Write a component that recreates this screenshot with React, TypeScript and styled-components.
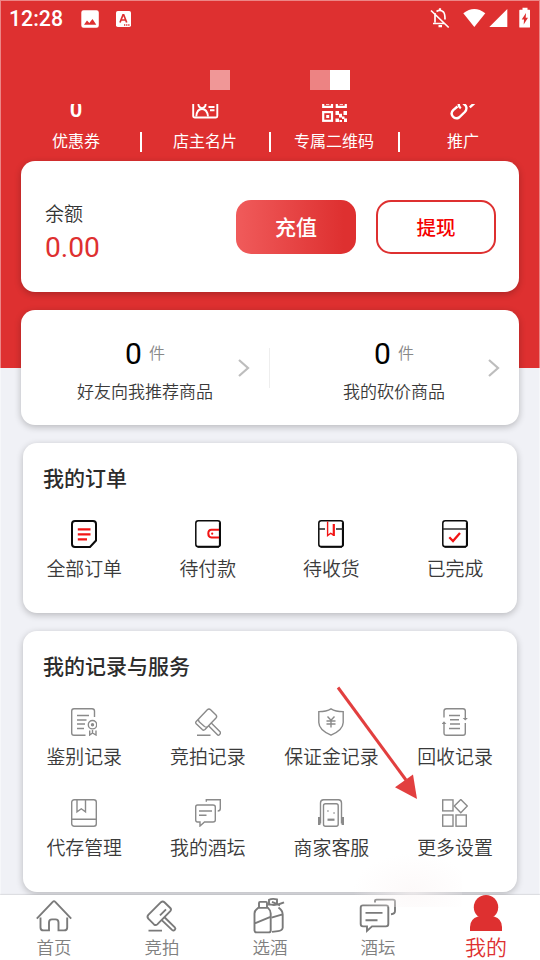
import React from "react";
import styled, { createGlobalStyle } from "styled-components";

const RED = "#de3030";

const GlobalStyle = createGlobalStyle`
  * { box-sizing: border-box; }
  html, body { margin: 0; padding: 0; background: #f0f1f6; }
  body { font-family: Roboto, "Noto Sans CJK SC", sans-serif; overflow: hidden; }
  svg { display: block; flex: none; }
`;

const Page = styled.div`
  position: relative;
  width: 540px;
  height: 960px;
  overflow: hidden;
  display: flex;
  flex-direction: column;
  background: linear-gradient(${RED} 0 368px, #f0f1f6 368px);
  &::after {
    content: "";
    position: absolute;
    inset: 0 0 -2px 0;
    box-shadow: inset 0 0 0 1px rgba(255, 255, 255, 0.42);
    pointer-events: none;
  }
`;

const StatusBar = styled.div`
  height: 38px;
  flex: none;
  display: flex;
  align-items: center;
  padding: 0 10px 0 9px;
  color: #fff;
`;
const Clock = styled.span`
  font-size: 21.3px;
  font-weight: 500;
  line-height: 38px;
  width: 55px;
`;
const StatusLeft = styled.div`
  display: flex;
  align-items: center;
  gap: 17px;
  flex: 1;
`;
const StatusRight = styled.div`
  display: flex;
  align-items: center;
`;

const TitleBar = styled.div`
  height: 66px;
  flex: none;
  display: flex;
  padding: 32px 0 0 210px;
`;
const Block = styled.div<{ $color: string; $gap?: number }>`
  width: 20px;
  height: 20px;
  margin-right: ${(p) => p.$gap ?? 0}px;
  background: ${(p) => p.$color};
`;

const Shortcuts = styled.div`
  height: 57px;
  flex: none;
  overflow: hidden;
  display: grid;
  grid-template-columns: repeat(4, 129px);
  padding-left: 13px;
`;
const Shortcut = styled.div`
  display: flex;
  flex-direction: column;
  align-items: center;
  padding-right: 2px;
  color: #fff;
  background: linear-gradient(#fff, #fff) right 28px / 2px 20px no-repeat;
  &:last-child { background: none; }
`;
const ShortcutTop = styled.div`
  height: 28px;
  margin-right: 1px;
  overflow: hidden;
`;
const ShortcutCount = styled.div`
  font-size: 22px;
  font-weight: 600;
  line-height: 22px;
  margin-top: -7px;
  padding-top: 2px;
`;
const ShortcutLabel = styled.div`
  font-size: 16px;
  line-height: 20px;
  margin-right: 1px;
`;

const Card = styled.section<{ $h: number; $gap: number; $inset: number }>`
  flex: none;
  height: ${(p) => p.$h}px;
  margin: 0 ${(p) => p.$inset}px ${(p) => p.$gap}px;
  border-radius: 14px;
  background: #fff;
  box-shadow: 0 2px 7px rgba(0, 0, 0, 0.24);
`;

const Balance = styled(Card)`
  display: flex;
  align-items: center;
  padding: 0 23px 0 24px;
`;
const BalanceInfo = styled.div`
  flex: 1;
  padding-top: 14px;
`;
const BalanceLabel = styled.div`
  font-size: 19px;
  line-height: 28px;
  color: #333;
  font-weight: 350;
`;
const BalanceValue = styled.div`
  font-size: 28.2px;
  line-height: 37px;
  color: ${RED};
`;
const Button = styled.button<{ $outline?: boolean }>`
  width: 120px;
  height: 54px;
  margin-left: ${(p) => (p.$outline ? 20 : 0)}px;
  padding: 0 0 1px;
  border-radius: 15px;
  border: ${(p) => (p.$outline ? `2px solid ${RED}` : "0")};
  background: ${(p) => (p.$outline ? "#fff" : `linear-gradient(90deg, #f05b5b, ${RED} 90%)`)};
  color: ${(p) => (p.$outline ? "#f50000" : "#fff")};
  font-family: inherit;
  font-weight: 500;
  font-size: ${(p) => (p.$outline ? 19.5 : 21)}px;
`;

const Goods = styled(Card)`
  display: grid;
  grid-template-columns: 249px 1fr;
`;
const GoodsItem = styled.div<{ $divider?: boolean }>`
  display: flex;
  align-items: center;
  justify-content: space-between;
  padding: 0 ${(p) => (p.$divider ? 20 : 19)}px 0 ${(p) => (p.$divider ? 56 : 73)}px;
  background: ${(p) =>
    p.$divider ? "linear-gradient(#eee, #eee) right 38px / 1px 40px no-repeat" : "none"};
`;
const GoodsText = styled.div`
  display: flex;
  flex-direction: column;
  align-items: center;
  padding-top: 8px;
`;
const GoodsCount = styled.div`
  display: flex;
  align-items: center;
  height: 40px;
  gap: 7px;
  color: #000;
  font-size: 30px;
  line-height: 40px;
`;
const Unit = styled.span`
  font-size: 16px;
  color: #888;
  font-weight: 350;
`;
const GoodsLabel = styled.div`
  font-size: 17px;
  line-height: 36px;
  height: 36px;
  color: #3a3a3a;
  font-weight: 350;
  white-space: nowrap;
`;

const CardTitle = styled.h2`
  margin: 0;
  padding-left: 20px;
  font-size: 21px;
  line-height: 30px;
  font-weight: 500;
  color: #2c2c2c;
`;
const Panel = styled(Card)`
  padding-top: 21px;
`;
const Grid = styled.div`
  display: grid;
  grid-template-columns: repeat(4, 123.6px);
  grid-auto-rows: 91px;
  margin: 26px 0 0 -0.6px;
`;
const Entry = styled.div`
  display: flex;
  flex-direction: column;
  align-items: center;
  gap: 7px;
`;
const EntryLabel = styled.span`
  font-size: 18.9px;
  line-height: 30px;
  color: #3a3a3a;
  font-weight: 350;
  white-space: nowrap;
`;

const TabBar = styled.nav`
  height: 65px;
  flex: none;
  display: grid;
  grid-template-columns: repeat(5, 108px);
  background: #fff;
  box-shadow: 0 -1px 1px rgba(0, 0, 0, 0.08);
  z-index: 1;
`;
const Tab = styled.div<{ $active?: boolean }>`
  display: flex;
  flex-direction: column;
  align-items: center;
  color: ${(p) => (p.$active ? RED : "#808080")};
  font-size: ${(p) => (p.$active ? 21 : 17.5)}px;
  font-weight: 350;
  line-height: 29px;
`;
const TabIcon = styled.div`
  height: 39px;
  flex: none;
`;

const Pointer = styled.svg`
  position: absolute;
  left: 330px;
  top: 680px;
`;
const Haze = styled.div`
  position: absolute;
  left: 352px;
  top: 853px;
  width: 110px;
  height: 54px;
  z-index: 2;
  background: radial-gradient(ellipse at 55% 70%, rgba(251, 246, 246, 0.65), rgba(255, 252, 252, 0) 70%);
`;

type SvgProps = { w: number; h: number; stroke?: string; sw?: number; children: React.ReactNode };
const Svg = ({ w, h, stroke = "none", sw = 1, children }: SvgProps) => (
  <svg width={w} height={h} viewBox={`0 0 ${w} ${h}`} fill="none" stroke={stroke} strokeWidth={sw}>
    {children}
  </svg>
);

const shortcuts = [
  { label: "优惠券", top: <ShortcutCount>0</ShortcutCount> },
  {
    label: "店主名片",
    top: (
      <Svg w={27} h={18} stroke="#fff" sw={1.9}>
        <path d="M1.2 -3V12Q1.2 13.5 3 13.5H24Q25.3 13.5 25.3 12V-3" />
        <circle cx="10" cy="0.5" r="3.6" />
        <path d="M4.3 12.5Q4.8 5 10 5T16 12.5" />
        <path d="M16.5 3H22.5M18 6.3H22.5" />
      </Svg>
    ),
  },
  {
    label: "专属二维码",
    top: (
      <Svg w={25} h={18}>
        <path d="M1.2 -4V2.8H10V-4M14.8 -4V2.8H23.8V-4" stroke="#fff" strokeWidth="2.2" />
        <path d="M4 0H7.3V.8H4ZM17.7 0H21V.8H17.7Z" fill="#fff" />
        <rect x="1.2" y="8.1" width="8.8" height="8.7" stroke="#fff" strokeWidth="2.2" />
        <path
          d="M4.2 11H7.2V14H4.2ZM13.5 7H17V11H13.5ZM21.5 7H25V11H21.5ZM17 9.7H20V13.5H17ZM13.5 14.5H17V18H13.5ZM20 12.5H22.5V15H20ZM22 14.5H25V18H22ZM17.5 16H20V18H17.5Z"
          fill="#fff"
        />
      </Svg>
    ),
  },
  {
    label: "推广",
    top: (
      <Svg w={26} h={18} stroke="#fff" sw={2.4}>
        <path d="M7.5 2.5L3.2 6.2C-.8 10.2 4.2 16.5 9.3 13.4L14.8 8C17.4 5 16.6 2 14.5 .5L12.5 -1.5" />
        <path d="M9.2 -1Q7.8 2.2 10.8 4.4M19.8 3.4L25 -1.4" />
      </Svg>
    ),
  },
];

const orders = [
  {
    label: "全部订单",
    icon: (
      <>
        <path d="M4 1H22Q25 1 25 4V20.5L19 27H4Q1 27 1 24V4Q1 1 4 1Z" stroke="#0a0a0a" strokeWidth="2" />
        <path d="M6.8 9.3H19.5M6.8 14.3H19.5M6.8 19.3H16" stroke="#f21414" strokeWidth="2.3" />
      </>
    ),
  },
  {
    label: "待付款",
    icon: (
      <>
        <rect x="0.8" y="0.8" width="24.4" height="26" rx="2.5" stroke="#0a0a0a" strokeWidth="1.5" />
        <path d="M24.9 2.5V25.5M2.5 26.8H24" stroke="#0a0a0a" strokeWidth="2" />
        <path d="M24 9.8H16.5Q13.3 9.8 13.3 13.5T16.5 17.4H24" stroke="#f21414" strokeWidth="2" />
        <circle cx="17.2" cy="13.7" r="1.1" fill="#f21414" />
      </>
    ),
  },
  {
    label: "待收货",
    icon: (
      <>
        <rect x="0.8" y="0.8" width="24.4" height="26" rx="2.5" stroke="#0a0a0a" strokeWidth="1.5" />
        <path d="M24.9 2.5V25.5M2.5 26.8H24" stroke="#0a0a0a" strokeWidth="2" />
        <path d="M1 9H7M18 9H25" stroke="#222" strokeWidth="1.4" />
        <path d="M9.6 1.5V15.6L12.7 13.3L16 15.2" stroke="#f21414" strokeWidth="1.4" />
        <path d="M15.8 4V16" stroke="#f21414" strokeWidth="2.2" />
      </>
    ),
  },
  {
    label: "已完成",
    icon: (
      <>
        <rect x="0.8" y="0.8" width="24.4" height="26" rx="2.5" stroke="#0a0a0a" strokeWidth="1.5" />
        <path d="M24.9 2.5V25.5M2.5 26.8H24" stroke="#0a0a0a" strokeWidth="2" />
        <path d="M1 9H25" stroke="#222" strokeWidth="1.4" />
        <path d="M7.3 17.3L11 21L18 13" stroke="#f21414" strokeWidth="2.3" />
      </>
    ),
  },
];

const services = [
  {
    label: "鉴别记录",
    icon: (
      <>
        <path d="M23.5 9V3Q23.5 .7 21 .7H3Q.7 .7 .7 3V25Q.7 27.3 3 27.3H14.5" />
        <path d="M6 7.5H18M6 12H15.5M6 16H14M6 20.5H13" />
        <circle cx="21.5" cy="16.7" r="4.2" />
        <circle cx="21.5" cy="16.7" r="1" fill="#8a8a8a" />
        <path d="M18.7 22.5V27L21.5 25L25 27V22.5M21.5 22V25" />
      </>
    ),
  },
  {
    label: "竞拍记录",
    icon: (
      <>
        <path d="M12.3 1.8Q14 .2 15.6 1.8L21 7Q22.3 8.5 21 10L10 21.6Q8.7 22.8 7.3 21.6L1.2 15.8Q.2 14.5 1.2 13.4Z" />
        <path d="M3.5 11.5Q3.5 13.5 5 14.5L9.5 18.5Q11 19.5 12 19" />
        <path d="M16 14.8L25 23.8Q26 25 25 26L24.4 26.7Q23.3 27.7 22.2 26.5L13.3 17.6M2 27.2H15.5" />
      </>
    ),
  },
  {
    label: "保证金记录",
    icon: (
      <>
        <path d="M13 .8Q8.5 3.6 .8 3.6V14.5Q1 22 13 27.2Q25 22 25.2 14.5V3.6Q17.5 3.6 13 .8Z" />
        <path d="M9.5 8.5L13 12.3L16.5 8.5M8.5 13H17.5M8.5 16H17.5M13 12.3V19.5" />
      </>
    ),
  },
  {
    label: "回收记录",
    icon: (
      <>
        <path d="M2 9.5V3Q2 .7 4.5 .7H21Q23.3 .7 23.3 3V10M23.3 15V25Q23.3 27.3 21 27.3H4.5Q2 27.3 2 25V16" />
        <path d="M7 7.5H18M8 11.7H17M8 16H18M7 20.5H18" />
        <path d="M20.7 10H25.9L23.3 12.6ZM-.4 16H4.4L2 13.3Z" fill="#8a8a8a" strokeWidth="0" />
      </>
    ),
  },
  {
    label: "代存管理",
    icon: (
      <>
        <rect x="0.7" y="0.7" width="24.6" height="26.6" rx="2.5" />
        <path d="M.7 20.3H25.3M6 .7V12.8L10.3 9.8L14.5 12.8V.7" />
      </>
    ),
  },
  {
    label: "我的酒坛",
    icon: (
      <>
        <path d="M11.3 2.7V.7H25.3V9.5Q25.3 12 22.7 12" />
        <path d="M2.5 6H18Q20.3 6 20.3 8V21Q20.3 23 18 23H9.5L5 27V23H2.5Q.7 23 .7 21V8Q.7 6 2.5 6Z" />
        <path d="M4 12H17M4 16.3H11.5" />
      </>
    ),
  },
  {
    label: "商家客服",
    icon: (
      <>
        <path d="M2.5 24.5V4Q2.5 .8 5.5 .8H20.5Q23.5 .8 23.5 4V24.5" />
        <path d="M1.2 18V26M24.8 18V26" strokeWidth="2.4" />
        <rect x="5.5" y="4.7" width="14.7" height="22.6" rx="2" />
        <path d="M9.5 20.7H16.5" strokeWidth="2.2" />
        <path d="M9.3 12H10.6M15.4 14H16.7" />
      </>
    ),
  },
  {
    label: "更多设置",
    icon: (
      <>
        <rect x="0.7" y="0.9" width="10.3" height="11" />
        <rect x="0.7" y="16" width="10.3" height="11.2" />
        <rect x="14" y="16" width="10.3" height="11.2" />
        <path d="M18.8 .5L25.3 7L18.8 13.7L12.3 7Z" />
      </>
    ),
  },
];

const tabs = [
  {
    label: "首页",
    icon: (
      <>
        <path d="M.8 19.2L17 2.3Q18 1.2 19 2.3L35.2 19.2" />
        <path d="M4.5 18V28Q4.5 31 7.5 31H13V23Q13 20 16 20H19.5Q22.5 20 22.5 23V31H28Q31.2 31 31.2 28V18" />
      </>
    ),
  },
  {
    label: "竞拍",
    icon: (
      <>
        <path d="M17 2.8Q18.7 1.2 20.4 2.8L26.3 8.6Q27.7 10.2 26.3 11.8L13.3 25Q11.7 26.4 10 25L4.3 19.3Q2.7 17.3 4.3 15.5Z" />
        <path d="M16 16L22 10M20.5 17.8L30.8 28Q32 29.3 30.8 30.5Q29.5 31.8 28 30.5L17.5 20.5M4.5 31.2H18" />
      </>
    ),
  },
  {
    label: "选酒",
    icon: (
      <>
        <path d="M7 8.5V3.5Q7 2.5 8 2.5H14Q15 2.5 15 3.5V8.5" />
        <path d="M6 8.5H16Q18.7 11 18.7 14V31Q18.7 33 16.5 33H5Q2.5 33 2.5 31V14Q2.5 11 6 8.5ZM2.8 24L18.5 17.5" />
        <path d="M17 6V.5Q20 -1.2 25 0V6M16.5 4.8Q24 7 32 3M20 2.5L28 6M26.5 8Q30.7 11 30.7 15V28.5Q30 31.5 26 31.7L20 32.5M19.5 18.3L30.5 15" />
      </>
    ),
  },
  {
    label: "酒坛",
    icon: (
      <>
        <path d="M15 3.2V1.5Q15 .2 16.5 .2H33Q35 .2 35 2V11.5Q35 14.3 31 14.8" />
        <path d="M3 6H26Q28.3 6 28.3 8.3V24.7Q28.3 27 26 27H12L7 31.5V27H3Q.7 27 .7 24.7V8.3Q.7 6 3 6Z" />
        <path d="M5.5 13.5H22.5M5.5 20.8H17.5" />
      </>
    ),
  },
];

const StatusIcons = () => (
  <StatusRight>
    <Svg w={100} h={24}>
      <g stroke="#fff" strokeWidth="1.8" transform="translate(0 1)">
        <path d="M1 2.5L18.7 19.5M5 5V14.5M3 15.5H14.5M6.5 3.5Q10 1.2 13.5 4Q15 5.5 15 11.5" strokeWidth="1.7" />
        <path d="M8.5 18.2H12M10 .2V2" strokeWidth="2.2" />
      </g>
      <path d="M33.3 6.3Q44.3 -2.3 55.3 6.3L44.3 20Z" fill="#fff" />
      <path d="M77.3 2V20H59.3Z" fill="#fff" />
      <path
        d="M92.5 1.3H97.5V3.3H99.5Q100 3.3 100 4V20.5Q100 21 99.5 21H90Q89.3 21 89.3 20.5V4Q89.3 3.3 90 3.3H92.5ZM96 6.5L91.7 13H94L93.7 18L98 11.3H95.7Z"
        fill="#fff"
        fillRule="evenodd"
        transform="translate(0 -.5)"
      />
    </Svg>
  </StatusRight>
);

export default function App() {
  return (
    <>
      <GlobalStyle />
      <Page>
        <StatusBar>
          <StatusLeft>
            <Clock>12:28</Clock>
            <Svg w={18} h={18}>
              <path
                d="M2.5 .3H15.5Q17.8 .3 17.8 2.5V15.5Q17.8 17.7 15.5 17.7H2.5Q.3 17.7 .3 15.5V2.5Q.3 .3 2.5 .3ZM3 14.7H15.3L11.5 9L8.3 13L6 10.5Z"
                fill="#fff"
                fillRule="evenodd"
              />
            </Svg>
            <Svg w={16} h={16}>
              <rect width="15" height="16" rx="1.8" fill="#fff" />
              <path d="M4 11.5L7 3.8H7.7L10.7 11.5M5.2 9H9.5" stroke={RED} strokeWidth="1.7" />
              <path d="M8 14H13.5" stroke={RED} strokeWidth="1.3" strokeDasharray="1.3 .8" />
            </Svg>
          </StatusLeft>
          <StatusIcons />
        </StatusBar>
        <TitleBar>
          <Block $color="#f09797" $gap={80} />
          <Block $color="#ed8383" />
          <Block $color="#fff" />
        </TitleBar>

        <Shortcuts>
          {shortcuts.map((s) => (
            <Shortcut key={s.label}>
              <ShortcutTop>{s.top}</ShortcutTop>
              <ShortcutLabel>{s.label}</ShortcutLabel>
            </Shortcut>
          ))}
        </Shortcuts>

        <Balance $h={131} $gap={18} $inset={21}>
          <BalanceInfo>
            <BalanceLabel>余额</BalanceLabel>
            <BalanceValue>0.00</BalanceValue>
          </BalanceInfo>
          <Button>充值</Button>
          <Button $outline>提现</Button>
        </Balance>

        <Goods $h={115} $gap={18} $inset={21}>
          {["好友向我推荐商品", "我的砍价商品"].map((label, i) => (
            <GoodsItem key={label} $divider={i === 0}>
              <GoodsText>
                <GoodsCount>
                  0<Unit>件</Unit>
                </GoodsCount>
                <GoodsLabel>{label}</GoodsLabel>
              </GoodsText>
              <Svg w={12} h={18} stroke="#bdbdbd" sw={2.2}>
                <path d="M1 1L10 9L1 17" />
              </Svg>
            </GoodsItem>
          ))}
        </Goods>

        <Panel $h={170} $gap={18} $inset={23}>
          <CardTitle>我的订单</CardTitle>
          <Grid>
            {orders.map((o) => (
              <Entry key={o.label}>
                <Svg w={26} h={28}>{o.icon}</Svg>
                <EntryLabel>{o.label}</EntryLabel>
              </Entry>
            ))}
          </Grid>
        </Panel>

        <Panel $h={261} $gap={3} $inset={23}>
          <CardTitle>我的记录与服务</CardTitle>
          <Grid>
            {services.map((s) => (
              <Entry key={s.label}>
                <Svg w={26} h={28} stroke="#8a8a8a" sw={1.4}>{s.icon}</Svg>
                <EntryLabel>{s.label}</EntryLabel>
              </Entry>
            ))}
          </Grid>
        </Panel>

        <TabBar>
          {tabs.map((t) => (
            <Tab key={t.label}>
              <TabIcon>
                <svg width="36" height="36" viewBox="0 -4.4 36 36" overflow="visible" fill="none" stroke="#7a7a7a" strokeWidth="1.9">
                  {t.icon}
                </svg>
              </TabIcon>
              {t.label}
            </Tab>
          ))}
          <Tab $active>
            <TabIcon>
              <Svg w={32} h={36}>
                <circle cx="16" cy="12.2" r="12.2" fill={RED} />
                <path d="M0 36V32Q0 24 8 21.5H24Q32 24 32 32V36Z" fill={RED} />
              </Svg>
            </TabIcon>
            我的
          </Tab>
        </TabBar>

        <Haze />
        <Pointer width="96" height="126" viewBox="0 0 96 126">
          <path d="M8 7.5L76 100" stroke="#e23f3f" strokeWidth="3" />
          <path d="M87 119L65 107.3L83 94.5Z" fill="#e23f3f" />
        </Pointer>
      </Page>
    </>
  );
}
